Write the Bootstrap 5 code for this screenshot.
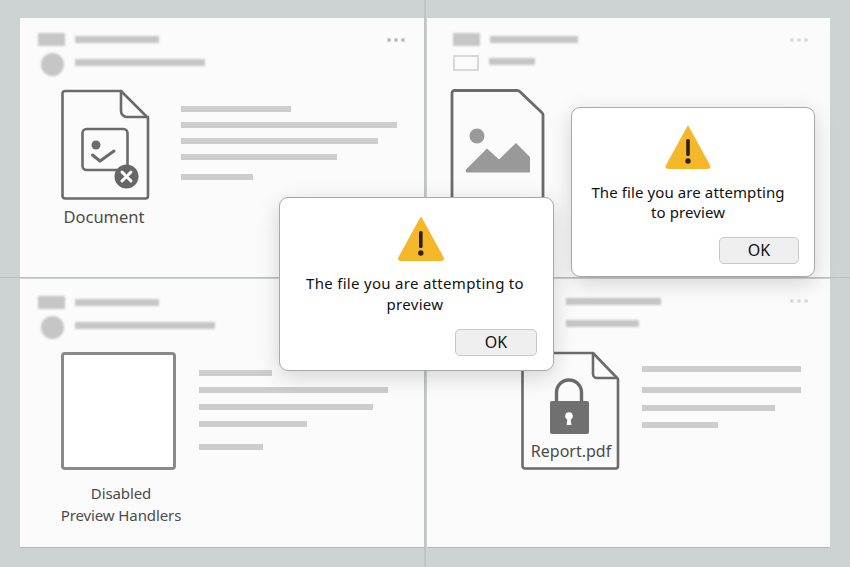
<!DOCTYPE html>
<html lang="en">
<head>
    <meta charset="UTF-8">
    <meta name="viewport" content="width=device-width, initial-scale=1.0">
    <title>File preview errors</title>
    <link href="https://cdn.jsdelivr.net/npm/bootstrap@5.3.0/dist/css/bootstrap.min.css" rel="stylesheet">
    <style>
        html, body { height: 567px; }
        body {
            background: #cdd2d3;
            font-family: "Noto Sans", "Liberation Sans", sans-serif;
            color: #4a4a4a;
            overflow: hidden;
        }
        .sheet {
            display: grid;
            grid-template-columns: 404px 403px;
            grid-template-rows: 259px 269px;
            column-gap: 3px;
            row-gap: 2px;
            padding: 18px 0 0 20px;
        }
        .tile { background: #fbfbfb; padding: 15px 19px 0 18px; min-width: 0; }
        .tile-tr { padding: 15px 22px 0 26px; }
        .tile-low { padding-top: 17px; border-bottom: 1px solid #b4b8b9; }
        .tile-br { padding: 18px 22px 0 0; }

        .split-h { left: 0; right: 0; top: 277px; height: 1px; background: #bcc0c1; }
        .split-v { top: 0; bottom: 0; left: 424px; width: 2px; background: #c0c4c5; }

        .ghost { background: #c6c6c6; filter: blur(1px); }
        .block { width: 27px; height: 13px; }
        .disc { width: 23px; height: 23px; border-radius: 50%; margin-left: 3px; }
        .ghost-frame { width: 26px; height: 16px; border: 2px solid #d9d9d9; filter: blur(.6px); }
        .head-bar { height: 7px; }
        .bar-raised { margin-bottom: 5px; }
        .bar-raised-s { margin-bottom: 3px; }
        .dots { gap: 3px; }
        .dots i { width: 4px; height: 4px; border-radius: 50%; background: #bdbdbd; filter: blur(.6px); }
        .dots-pale i { background: #dcdcdc; }

        .row-top { height: 13px; gap: 10px; }
        .row-sub { margin-top: 7px; height: 23px; gap: 11px; }
        .row-sub-2 { margin-top: 9px; height: 16px; gap: 10px; }
        .row-top-4 { height: 8px; padding-left: 139px; }
        .row-sub-4 { height: 8px; margin-top: 14px; padding-left: 139px; }

        .sk { height: 6px; background: #cdcdcd; margin-top: 10px; }
        .sk-far { margin-top: 14px; }

        .fig-doc { margin: 13px 0 0 22px; width: 90px; }
        .lines-doc { margin: 20px 0 0 31px; }
        .fig-img { margin: 17px 0 0 -4px; width: 96px; }
        .fig-blank { margin: 13px 0 0 23px; width: 115px; }
        .blank-box { width: 115px; height: 118px; border: 3px solid #8a8a8a; border-radius: 4px; background: #fff; }
        .lines-blank { margin: 20px 0 0 23px; }
        .lines-blank .sk { margin-top: 11px; }
        .lines-blank .sk-far { margin-top: 17px; }
        .fig-lock { margin: 24px 0 0 94px; width: 100px; }
        .lines-lock { margin: 29px 0 0 21px; }
        .lines-lock .sk:nth-child(2) { margin-top: 15px; }
        .lines-lock .sk:nth-child(3) { margin-top: 12px; }
        .lines-lock .sk:nth-child(4) { margin-top: 11px; }

        .fig-label { font-size: 16px; line-height: 22px; color: #4b4b4b; text-align: center; }
        .label-doc { margin: 5px 2px 0 0; font-size: 16.500px; }
        .label-blank { margin: 12px -15px 0 -10px; font-size: 15px; letter-spacing: -.1px; }
        .label-pdf { left: 0; right: 0; bottom: 9px; }

        .alert-box {
            border: 1px solid #a9a9a9;
            border-radius: 9px;
            box-shadow: 0 6px 22px rgba(0, 0, 0, .16);
            background: #fff;
            color: #111;
            font-size: 15px;
            line-height: 21px;
            text-align: center;
        }
        .alert-main { left: 279px; top: 197px; width: 275px; height: 174px; padding: 18px 19px 0 16px; }
        .alert-main svg { margin-left: 11px; }
        .alert-side { left: 571px; top: 107px; width: 244px; height: 170px; padding: 17px 26px 0 16px; }
        .alert-msg { margin: 12px 0 0; letter-spacing: .3px; }
        .alert-side .alert-msg { letter-spacing: .1px; line-height: 20px; margin-top: 13px; }
        .btn-ok {
            --bs-btn-padding-y: 0;
            --bs-btn-font-size: 16px;
            --bs-btn-color: #111;
            --bs-btn-bg: #efefef;
            --bs-btn-border-color: #c8c8c8;
            --bs-btn-border-radius: 5px;
            height: 27px;
            line-height: 25px;
        }
        .alert-main .btn-ok { width: 82px; right: 16px; bottom: 14px; }
        .alert-side .btn-ok { width: 80px; right: 15px; bottom: 12px; }
    </style>
</head>
<body>
    <div class="sheet">
        <!-- top left -->
        <section class="tile">
            <div class="d-flex align-items-center row-top">
                <div class="ghost block"></div>
                <div class="ghost head-bar" style="width: 84px"></div>
                <div class="d-flex dots ms-auto"><i></i><i></i><i></i></div>
            </div>
            <div class="d-flex align-items-center row-sub">
                <div class="ghost disc"></div>
                <div class="ghost head-bar bar-raised" style="width: 130px"></div>
            </div>
            <div class="d-flex">
                <div class="fig-doc flex-shrink-0">
                    <svg width="90" height="112" viewBox="0 0 90 112" class="d-block">
                        <g fill="none" stroke="#6b6b6b" stroke-width="2.6" stroke-linejoin="round" stroke-linecap="round">
                            <path d="M5 2h56l27 27v78a2.500 2.500 0 0 1-2.500 2.500H5a2.500 2.500 0 0 1-2.500-2.500V4.500A2.500 2.500 0 0 1 5 2z"/>
                            <path d="M61 2v20a6 6 0 0 0 6 6h21"/>
                            <rect x="22.500" y="40" width="45" height="41" rx="4"/>
                            <path d="M32.500 66l7.500 6 14-10" stroke-width="3"/>
                        </g>
                        <circle cx="36" cy="56" r="4.500" fill="#6b6b6b"/>
                        <circle cx="66.500" cy="87.500" r="12" fill="#666"/>
                        <path d="M62 83l9 9m0-9l-9 9" stroke="#fff" stroke-width="3" stroke-linecap="round"/>
                    </svg>
                    <div class="fig-label label-doc">Document</div>
                </div>
                <div class="lines-doc">
                    <div class="sk" style="width: 110px"></div>
                    <div class="sk" style="width: 216px"></div>
                    <div class="sk" style="width: 197px"></div>
                    <div class="sk" style="width: 156px"></div>
                    <div class="sk sk-far" style="width: 72px"></div>
                </div>
            </div>
        </section>

        <!-- top right -->
        <section class="tile tile-tr">
            <div class="d-flex align-items-center row-top">
                <div class="ghost block"></div>
                <div class="ghost head-bar" style="width: 88px"></div>
                <div class="d-flex dots dots-pale ms-auto"><i></i><i></i><i></i></div>
            </div>
            <div class="d-flex align-items-center row-sub-2">
                <div class="ghost-frame"></div>
                <div class="ghost head-bar bar-raised-s" style="width: 46px"></div>
            </div>
            <div class="fig-img">
                <svg width="96" height="112" viewBox="0 0 96 112" class="d-block">
                    <path d="M3 112V5a2.500 2.500 0 0 1 2.500-2.500H68a4 4 0 0 1 3 1.200l22 21a3 3 0 0 1 1 2.300V112" fill="none" stroke="#6b6b6b" stroke-width="2.800"/>
                    <circle cx="28" cy="48" r="7.500" fill="#999"/>
                    <path d="M17 81.500l21-21 12 11 17-16.500 14 14v15.500H19a2 2 0 0 1-2-3z" fill="#999"/>
                </svg>
            </div>
        </section>

        <!-- bottom left -->
        <section class="tile tile-low">
            <div class="d-flex align-items-center row-top">
                <div class="ghost block"></div>
                <div class="ghost head-bar" style="width: 84px"></div>
            </div>
            <div class="d-flex align-items-center row-sub">
                <div class="ghost disc"></div>
                <div class="ghost head-bar bar-raised" style="width: 140px"></div>
            </div>
            <div class="d-flex">
                <div class="fig-blank flex-shrink-0">
                    <div class="blank-box"></div>
                    <div class="fig-label label-blank">Disabled<br>Preview Handlers</div>
                </div>
                <div class="lines-blank">
                    <div class="sk" style="width: 73px"></div>
                    <div class="sk" style="width: 189px"></div>
                    <div class="sk" style="width: 174px"></div>
                    <div class="sk" style="width: 108px"></div>
                    <div class="sk sk-far" style="width: 64px"></div>
                </div>
            </div>
        </section>

        <!-- bottom right -->
        <section class="tile tile-low tile-br">
            <div class="d-flex align-items-center row-top-4">
                <div class="ghost head-bar" style="width: 95px"></div>
                <div class="d-flex dots dots-pale ms-auto"><i></i><i></i><i></i></div>
            </div>
            <div class="d-flex align-items-center row-sub-4">
                <div class="ghost head-bar" style="width: 73px"></div>
            </div>
            <div class="d-flex">
                <div class="fig-lock flex-shrink-0 position-relative">
                    <svg width="100" height="120" viewBox="0 0 100 120" class="d-block">
                        <g fill="none" stroke="#6b6b6b" stroke-width="2.600" stroke-linejoin="round">
                            <path d="M4 2h68l25 26v87a2.500 2.500 0 0 1-2.500 2.500H4a2.500 2.500 0 0 1-2.500-2.500V4.500A2.500 2.500 0 0 1 4 2z"/>
                            <path d="M72 2v21a4 4 0 0 0 4 4h21"/>
                            <path d="M35.500 52V41.500a12.500 12.500 0 0 1 25 0V52" stroke-width="3.400"/>
                        </g>
                        <rect x="29" y="50" width="39" height="33" rx="2" fill="#707070"/>
                        <circle cx="48" cy="65" r="3.800" fill="#fff"/>
                        <path d="M46.600 66h2.800l1 8h-4.800z" fill="#fff"/>
                    </svg>
                    <div class="fig-label label-pdf position-absolute">Report.pdf</div>
                </div>
                <div class="lines-lock">
                    <div class="sk" style="width: 159px"></div>
                    <div class="sk" style="width: 159px"></div>
                    <div class="sk" style="width: 133px"></div>
                    <div class="sk" style="width: 76px"></div>
                </div>
            </div>
        </section>
    </div>

    <div class="split-h position-absolute"></div>
    <div class="split-v position-absolute"></div>

    <div class="alert-box alert-side position-absolute">
        <svg width="46" height="44" viewBox="0 0 46 44">
            <path d="M23 1L45 41a2 2 0 0 1-1.500 2.500h-41A2 2 0 0 1 1 41z" fill="#f5b82a" stroke="#f5b82a" stroke-linejoin="round"/>
            <rect x="21.200" y="14" width="3.600" height="17" rx="1.500" fill="#2b2115"/>
            <circle cx="23" cy="36" r="2.700" fill="#2b2115"/>
        </svg>
        <p class="alert-msg">The file you are attempting<br>to preview</p>
        <button type="button" class="btn btn-ok position-absolute">OK</button>
    </div>

    <div class="alert-box alert-main position-absolute">
        <svg width="48" height="45" viewBox="0 0 48 45">
            <path d="M24 1L46.500 42a2 2 0 0 1-1.500 2.500H3A2 2 0 0 1 1.500 42z" fill="#f5b82a" stroke="#f5b82a" stroke-linejoin="round"/>
            <rect x="22" y="15" width="3.600" height="17" rx="1.500" fill="#2b2115"/>
            <circle cx="23.800" cy="37" r="2.700" fill="#2b2115"/>
        </svg>
        <p class="alert-msg">The file you are attempting to<br>preview</p>
        <button type="button" class="btn btn-ok position-absolute">OK</button>
    </div>

    <script src="https://cdn.jsdelivr.net/npm/bootstrap@5.3.0/dist/js/bootstrap.bundle.min.js"></script>
</body>
</html>
